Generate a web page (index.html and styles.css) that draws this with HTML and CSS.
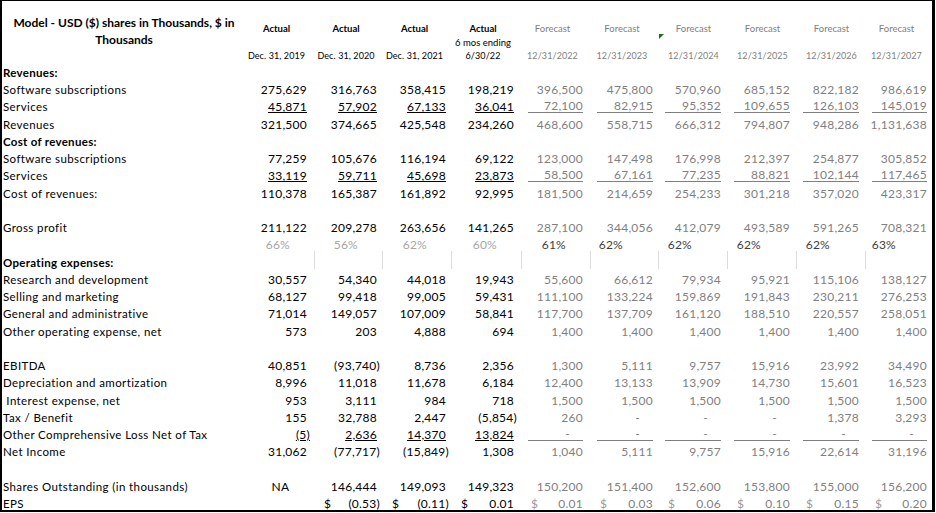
FILE: index.html
```html
<!DOCTYPE html>
<html>
<head>
<meta charset="utf-8">
<link rel="stylesheet" href="styles.css">
</head>
<body>
<div class="sheet">
  <span class="flag"></span>
  <div class="row head">
    <div class="title">Model - USD ($) shares in Thousands, $ in<br>Thousands</div>
    <div class="hc"><b>Actual</b><span></span><span>Dec. 31, 2019</span></div>
    <div class="hc"><b>Actual</b><span></span><span>Dec. 31, 2020</span></div>
    <div class="hc"><b>Actual</b><span></span><span>Dec. 31, 2021</span></div>
    <div class="hc"><b>Actual</b><span>6 mos ending</span><span>6/30/22</span></div>
    <div class="hc f"><span>Forecast</span><span></span><span>12/31/2022</span></div>
    <div class="hc f"><span>Forecast</span><span></span><span>12/31/2023</span></div>
    <div class="hc f"><span>Forecast</span><span></span><span>12/31/2024</span></div>
    <div class="hc f"><span>Forecast</span><span></span><span>12/31/2025</span></div>
    <div class="hc f"><span>Forecast</span><span></span><span>12/31/2026</span></div>
    <div class="hc f"><span>Forecast</span><span></span><span>12/31/2027</span></div>
  </div>

  <div class="row"><div class="lbl b">Revenues:</div></div>
  <div class="row"><div class="lbl">Software subscriptions</div><div class="v">275,629</div><div class="v">316,763</div><div class="v">358,415</div><div class="v">198,219</div><div class="v fc">396,500</div><div class="v fc">475,800</div><div class="v fc">570,960</div><div class="v fc">685,152</div><div class="v fc">822,182</div><div class="v fc">986,619</div></div>
  <div class="row ul"><div class="lbl">Services</div><div class="v"><u>45,871</u></div><div class="v"><u>57,902</u></div><div class="v"><u>67,133</u></div><div class="v"><u>36,041</u></div><div class="v fc"><i>72,100</i></div><div class="v fc"><i>82,915</i></div><div class="v fc"><i>95,352</i></div><div class="v fc"><i>109,655</i></div><div class="v fc"><i>126,103</i></div><div class="v fc"><i>145,019</i></div></div>
  <div class="row"><div class="lbl">Revenues</div><div class="v">321,500</div><div class="v">374,665</div><div class="v">425,548</div><div class="v">234,260</div><div class="v fc">468,600</div><div class="v fc">558,715</div><div class="v fc">666,312</div><div class="v fc">794,807</div><div class="v fc">948,286</div><div class="v fc">1,131,638</div></div>
  <div class="row"><div class="lbl b">Cost of revenues:</div></div>
  <div class="row"><div class="lbl">Software subscriptions</div><div class="v">77,259</div><div class="v">105,676</div><div class="v">116,194</div><div class="v">69,122</div><div class="v fc">123,000</div><div class="v fc">147,498</div><div class="v fc">176,998</div><div class="v fc">212,397</div><div class="v fc">254,877</div><div class="v fc">305,852</div></div>
  <div class="row ul"><div class="lbl">Services</div><div class="v"><u>33,119</u></div><div class="v"><u>59,711</u></div><div class="v"><u>45,698</u></div><div class="v"><u>23,873</u></div><div class="v fc"><i>58,500</i></div><div class="v fc"><i>67,161</i></div><div class="v fc"><i>77,235</i></div><div class="v fc"><i>88,821</i></div><div class="v fc"><i>102,144</i></div><div class="v fc"><i>117,465</i></div></div>
  <div class="row"><div class="lbl">Cost of revenues:</div><div class="v">110,378</div><div class="v">165,387</div><div class="v">161,892</div><div class="v">92,995</div><div class="v fc">181,500</div><div class="v fc">214,659</div><div class="v fc">254,233</div><div class="v fc">301,218</div><div class="v fc">357,020</div><div class="v fc">423,317</div></div>
  <div class="row"></div>
  <div class="row"><div class="lbl">Gross profit</div><div class="v">211,122</div><div class="v">209,278</div><div class="v">263,656</div><div class="v">141,265</div><div class="v fc">287,100</div><div class="v fc">344,056</div><div class="v fc">412,079</div><div class="v fc">493,589</div><div class="v fc">591,265</div><div class="v fc">708,321</div></div>
  <div class="row"><div class="lbl"></div><div class="v pa">66%</div><div class="v pa">56%</div><div class="v pa">62%</div><div class="v pa">60%</div><div class="v pf">61%</div><div class="v pf pw">62%</div><div class="v pf pw">62%</div><div class="v pf pw">62%</div><div class="v pf pw">62%</div><div class="v pf pw">63%</div></div>
  <div class="row grid"><div class="lbl b">Operating expenses:</div><div class="v"></div><div class="v"></div><div class="v"></div><div class="v"></div><div class="v"></div><div class="v"></div><div class="v"></div><div class="v"></div><div class="v"></div></div>
  <div class="row"><div class="lbl">Research and development</div><div class="v">30,557</div><div class="v">54,340</div><div class="v">44,018</div><div class="v">19,943</div><div class="v fc">55,600</div><div class="v fc">66,612</div><div class="v fc">79,934</div><div class="v fc">95,921</div><div class="v fc">115,106</div><div class="v fc">138,127</div></div>
  <div class="row"><div class="lbl">Selling and marketing</div><div class="v">68,127</div><div class="v">99,418</div><div class="v">99,005</div><div class="v">59,431</div><div class="v fc">111,100</div><div class="v fc">133,224</div><div class="v fc">159,869</div><div class="v fc">191,843</div><div class="v fc">230,211</div><div class="v fc">276,253</div></div>
  <div class="row"><div class="lbl">General and administrative</div><div class="v">71,014</div><div class="v">149,057</div><div class="v">107,009</div><div class="v">58,841</div><div class="v fc">117,700</div><div class="v fc">137,709</div><div class="v fc">161,120</div><div class="v fc">188,510</div><div class="v fc">220,557</div><div class="v fc">258,051</div></div>
  <div class="row"><div class="lbl">Other operating expense, net</div><div class="v">573</div><div class="v">203</div><div class="v">4,888</div><div class="v">694</div><div class="v fc">1,400</div><div class="v fc">1,400</div><div class="v fc">1,400</div><div class="v fc">1,400</div><div class="v fc">1,400</div><div class="v fc">1,400</div></div>
  <div class="row"></div>
  <div class="row"><div class="lbl">EBITDA</div><div class="v">40,851</div><div class="v"><span class="n">(93,740)</span></div><div class="v">8,736</div><div class="v">2,356</div><div class="v fc">1,300</div><div class="v fc">5,111</div><div class="v fc">9,757</div><div class="v fc">15,916</div><div class="v fc">23,992</div><div class="v fc">34,490</div></div>
  <div class="row"><div class="lbl">Depreciation and amortization</div><div class="v">8,996</div><div class="v">11,018</div><div class="v">11,678</div><div class="v">6,184</div><div class="v fc">12,400</div><div class="v fc">13,133</div><div class="v fc">13,909</div><div class="v fc">14,730</div><div class="v fc">15,601</div><div class="v fc">16,523</div></div>
  <div class="row"><div class="lbl">&nbsp;Interest expense, net</div><div class="v">953</div><div class="v">3,111</div><div class="v">984</div><div class="v">718</div><div class="v fc">1,500</div><div class="v fc">1,500</div><div class="v fc">1,500</div><div class="v fc">1,500</div><div class="v fc">1,500</div><div class="v fc">1,500</div></div>
  <div class="row"><div class="lbl">Tax / Benefit</div><div class="v">155</div><div class="v">32,788</div><div class="v">2,447</div><div class="v"><span class="n">(5,854)</span></div><div class="v fc">260</div><div class="v fc"><span class="z">-</span></div><div class="v fc"><span class="z">-</span></div><div class="v fc"><span class="z">-</span></div><div class="v fc">1,378</div><div class="v fc">3,293</div></div>
  <div class="row ul"><div class="lbl">Other Comprehensive Loss Net of Tax</div><div class="v"><u class="n">(5)</u></div><div class="v"><u>2,636</u></div><div class="v"><u>14,370</u></div><div class="v"><u>13,824</u></div><div class="v fc"><i><span class="z">-</span></i></div><div class="v fc"><i><span class="z">-</span></i></div><div class="v fc"><i><span class="z">-</span></i></div><div class="v fc"><i><span class="z">-</span></i></div><div class="v fc"><i><span class="z">-</span></i></div><div class="v fc"><i><span class="z">-</span></i></div></div>
  <div class="row"><div class="lbl">Net Income</div><div class="v">31,062</div><div class="v"><span class="n">(77,717)</span></div><div class="v"><span class="n">(15,849)</span></div><div class="v">1,308</div><div class="v fc">1,040</div><div class="v fc">5,111</div><div class="v fc">9,757</div><div class="v fc">15,916</div><div class="v fc">22,614</div><div class="v fc">31,196</div></div>
  <div class="row"></div>
  <div class="row"><div class="lbl">Shares Outstanding (in thousands)</div><div class="v na">NA</div><div class="v">146,444</div><div class="v">149,093</div><div class="v">149,323</div><div class="v fc">150,200</div><div class="v fc">151,400</div><div class="v fc">152,600</div><div class="v fc">153,800</div><div class="v fc">155,000</div><div class="v fc">156,200</div></div>
  <div class="row"><div class="lbl">EPS</div><div class="v"></div><div class="v eps"><span>$</span><span class="n">(0.53)</span></div><div class="v eps"><span>$</span><span class="n">(0.11)</span></div><div class="v eps"><span>$</span><span>0.01</span></div><div class="v eps fc"><span>$</span><span>0.01</span></div><div class="v eps fc"><span>$</span><span>0.03</span></div><div class="v eps fc"><span>$</span><span>0.06</span></div><div class="v eps fc"><span>$</span><span>0.10</span></div><div class="v eps fc"><span>$</span><span>0.15</span></div><div class="v eps fc"><span>$</span><span>0.20</span></div></div>
</div>
</body>
</html>
```

FILE: styles.css
```css
html, body {
  margin: 0;
  padding: 0;
  background: #fff;
}
body {
  font-family: Lato, "Open Sans", sans-serif;
  color: #000;
  width: 936px;
  height: 513px;
  overflow: hidden;
}
.sheet {
  position: relative;
  box-sizing: border-box;
  width: 935px;
  height: 512px;
  border-top: 1px solid #000;
  border-left: 2px solid #000;
  border-right: 3px solid #000;
  border-bottom: 2px solid #000;
}
.flag {
  position: absolute;
  left: 657px;
  top: 33px;
  width: 0;
  height: 0;
  border-top: 5px solid #1d6b1d;
  border-right: 5px solid transparent;
}
.row {
  display: grid;
  grid-template-columns: 244px 69px 68px 69px 70px 69px 68px 69px 69px 69px 66px;
  height: 17.25px;
}
.row.head {
  height: 60.5px;
}
.title {
  font-weight: bold;
  font-size: 12px;
  line-height: 17.5px;
  text-align: center;
  padding-top: 12.5px;
}
.hc {
  display: flex;
  flex-direction: column;
  align-items: center;
  padding-top: 21px;
  font-size: 9.5px;
  line-height: 13.5px;
  white-space: nowrap;
}
.hc span, .hc b {
  height: 13.5px;
}
.hc span:last-child {
  font-size: 9px;
  letter-spacing: 0.1px;
}
.hc b {
  font-weight: bold;
}
.hc.f {
  color: #7f7f7f;
}
.lbl {
  display: flex;
  align-items: flex-end;
  padding-left: 1px;
  font-size: 11.5px;
  line-height: 13px;
  letter-spacing: 0.4px;
  white-space: nowrap;
}
.lbl.b {
  font-weight: bold;
  letter-spacing: 0.3px;
}
.v {
  display: flex;
  align-items: flex-end;
  justify-content: flex-end;
  font-size: 12px;
  line-height: 13px;
  letter-spacing: 0.25px;
  white-space: nowrap;
  padding-right: 7px;
}
.row > :nth-child(2) { padding-right: 8px; }
.row > :nth-child(3) { padding-right: 6px; }
.row > :nth-child(4) { padding-right: 6px; }
.row > :nth-child(5) { padding-right: 8px; }
.row > :nth-child(6) { padding-right: 8px; }
.row > :nth-child(7) { padding-right: 6px; }
.row > :nth-child(11) { padding-right: 5px; }
.fc {
  color: #7f7f7f;
}
.n {
  margin-right: -3px;
}
.z {
  margin-right: 13px;
}
u {
  text-decoration: underline;
  text-underline-offset: 1px;
}
.fc i {
  font-style: normal;
  display: flex;
  justify-content: flex-end;
  flex: 1;
  margin-left: 6px;
  border-bottom: 1px solid #7f7f7f;
}
.pa {
  color: #a6a6a6;
}
.row > .pa, .row > .pf {
  padding-right: 25px;
}
.pf {
  color: #404040;
}
.row > .pw {
  padding-right: 36px;
}
.grid > .v {
  border-right: 1px solid #dcdcdc;
}
.na {
  justify-content: center;
}
.row > .na {
  padding-right: 0;
}
.eps {
  justify-content: space-between;
  padding-left: 9px;
}
.fc.eps span:first-child {
  color: #9a9a9a;
}
```
